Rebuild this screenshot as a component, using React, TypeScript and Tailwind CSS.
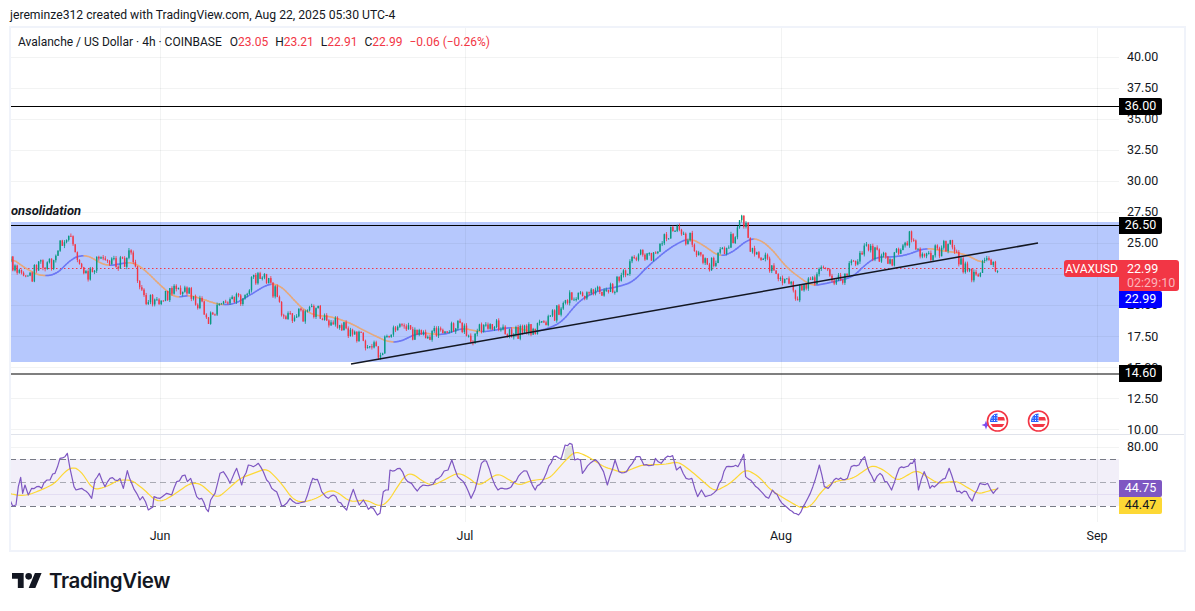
import type { ReactNode } from 'react';

// Everything in the plots is given in screenshot pixels; each svg's viewBox
// maps those back onto its own pane.
const PLOT_LEFT = 11;
const PLOT_WIDTH = 1108;
const MAIN_TOP = 28;
const MAIN_HEIGHT = 406;
const RSI_TOP = 435;
const RSI_HEIGHT = 87;

type Point = [number, number];

const PRICE_PATH: Point[] = [
  [10, 262], [20, 272], [28, 278], [38, 268], [45, 262], [52, 268], [58, 245], [66, 236], [72, 245], [76, 264],
  [90, 276], [98, 258], [112, 262], [125, 262], [130, 254], [136, 272], [146, 302], [158, 298], [175, 291],
  [190, 292], [200, 305], [208, 322], [216, 306], [230, 298], [242, 298], [252, 282], [264, 275], [274, 292],
  [283, 318], [300, 315], [316, 312], [328, 320], [345, 328], [360, 336], [378, 354], [388, 334], [400, 328],
  [420, 338], [440, 330], [455, 326], [470, 338], [490, 322], [505, 334], [525, 331], [545, 326], [556, 312],
  [570, 294], [590, 290], [605, 296], [620, 280], [636, 252], [650, 258], [660, 240], [674, 231], [690, 240],
  [698, 258], [708, 268], [722, 252], [733, 235], [742, 217], [750, 246], [765, 262], [775, 272], [785, 285],
  [798, 294], [810, 280], [820, 272], [838, 282], [850, 266], [865, 250], [878, 256], [890, 266], [900, 245],
  [912, 235], [920, 258], [935, 252], [950, 240], [957, 260], [968, 272], [975, 274], [984, 262], [997, 268],
];

const MA_PATH: Point[] = [
  [10, 257], [25, 268], [40, 276], [55, 275], [65, 266], [72, 258], [80, 256], [88, 255], [98, 262], [108, 266],
  [125, 263], [133, 262], [145, 270], [160, 285], [175, 298], [190, 295], [205, 300], [220, 305], [235, 304],
  [250, 295], [268, 284], [278, 284], [290, 295], [300, 307], [313, 315], [333, 317], [350, 323], [367, 332],
  [388, 342], [400, 342], [413, 335], [423, 333], [443, 335], [463, 328], [480, 332], [490, 331], [513, 327],
  [533, 332], [547, 329], [562, 322], [577, 303], [587, 296], [600, 290], [617, 287], [633, 282], [647, 267],
  [667, 250], [680, 242], [690, 238], [703, 245], [720, 257], [733, 252], [747, 240], [757, 238], [770, 247],
  [787, 268], [807, 283], [813, 286], [833, 282], [853, 277], [867, 263], [877, 257], [893, 257], [907, 255],
  [917, 251], [927, 248], [943, 251], [953, 252], [967, 255], [980, 262], [997, 268],
];

// RSI traces were read off two enlarged crops, so each has its own origin and scale
const fromCrop = (pts: Point[], ox: number, oy: number, sx: number, sy: number): Point[] =>
  pts.map(([x, y]) => [ox + x / sx, oy + y / sy]);

const RSI_LINE: Point[] = [
  ...fromCrop([
    [30, 210], [38, 228], [48, 225], [55, 170], [62, 142], [68, 190], [75, 165], [85, 195], [95, 175], [110, 170],
    [125, 175], [132, 158], [150, 150], [158, 132], [165, 130], [180, 85], [195, 80], [202, 70], [210, 115],
    [222, 170], [228, 180], [245, 175], [265, 190], [275, 205], [285, 150], [298, 130], [315, 170], [330, 145],
    [345, 150], [360, 145], [370, 175], [382, 122], [395, 160], [410, 190], [420, 210], [428, 200], [445, 240],
    [458, 232], [462, 200], [480, 205], [500, 190], [515, 195], [530, 155], [555, 135], [562, 155], [572, 145],
    [590, 200], [605, 205], [625, 245], [632, 210], [645, 190], [660, 130], [670, 125], [690, 160], [710, 115],
    [725, 165], [745, 105], [760, 110], [775, 100], [790, 125], [800, 150], [815, 175], [830, 185], [845, 228],
    [860, 220], [870, 205], [895, 220], [915, 215], [938, 145], [952, 148], [965, 185], [985, 205], [1000, 195],
    [1030, 230], [1040, 240], [1060, 178], [1078, 225], [1090, 210], [1105, 238], [1120, 235], [1132, 255],
    [1140, 250], [1150, 185], [1165, 180], [1170, 120], [1192, 116],
  ], 0, 430, 3, 3),
  ...fromCrop([
    [0, 100], [20, 140], [30, 145], [45, 168], [60, 150], [80, 150], [100, 130], [115, 108], [125, 105], [135, 75],
    [150, 125], [165, 140], [185, 190], [195, 165], [212, 85], [225, 78], [240, 130], [255, 165], [290, 155],
    [315, 115], [330, 108], [352, 165], [375, 130], [400, 65], [420, 70], [430, 30], [448, 28], [455, 75], [470, 75],
    [475, 115], [495, 85], [510, 75], [530, 110], [540, 150], [560, 75], [570, 110], [590, 110], [605, 85], [615, 65],
    [625, 65], [635, 90], [660, 90], [665, 70], [680, 85], [690, 70], [710, 62], [720, 105], [730, 95], [745, 130],
    [760, 130], [775, 185], [785, 165], [795, 185], [810, 180], [825, 165], [850, 95], [880, 95], [895, 58],
    [900, 125], [920, 145], [945, 175], [960, 190], [970, 165], [1000, 210], [1015, 225], [1038, 240], [1055, 205],
    [1075, 155], [1092, 90], [1105, 155], [1115, 160], [1130, 135], [1165, 130], [1175, 95], [1195, 90], [1210, 65],
    [1222, 110], [1235, 140], [1250, 115], [1280, 165], [1300, 100], [1335, 85], [1340, 72], [1350, 165], [1365, 110],
    [1380, 160], [1420, 130], [1430, 100], [1450, 170], [1475, 170], [1490, 198], [1510, 145], [1530, 145],
    [1545, 175], [1558, 158],
  ], 400, 435, 2.604, 3),
];

const RSI_MA: Point[] = [
  ...fromCrop([
    [30, 188], [50, 197], [85, 195], [130, 177], [165, 160], [190, 130], [215, 110], [240, 120], [280, 180],
    [320, 170], [355, 150], [395, 150], [440, 185], [460, 208], [485, 215], [520, 195], [570, 160], [600, 160],
    [650, 205], [670, 190], [720, 145], [800, 115], [840, 155], [880, 210], [910, 217], [950, 205], [990, 180],
    [1010, 185], [1050, 215], [1100, 210], [1140, 230], [1165, 215], [1192, 170],
  ], 0, 430, 3, 3),
  ...fromCrop([
    [0, 145], [15, 118], [32, 115], [60, 140], [85, 152], [110, 138], [150, 113], [175, 125], [205, 153], [255, 115],
    [285, 135], [310, 152], [340, 137], [390, 130], [420, 90], [455, 48], [490, 65], [530, 95], [580, 113], [630, 90],
    [690, 88], [725, 80], [760, 110], [800, 150], [820, 170], [860, 145], [900, 102], [935, 125], [965, 165],
    [1000, 190], [1045, 220], [1070, 215], [1100, 165], [1130, 140], [1180, 130], [1230, 90], [1260, 105],
    [1295, 138], [1345, 105], [1400, 145], [1450, 138], [1505, 177], [1558, 160],
  ], 400, 435, 2.604, 3),
];

const GRID_Y = [57, 88, 119, 150, 181, 212, 243, 274, 305, 336, 367, 398, 429];
const GRID_X = [160, 465, 781, 1097];

const PRICE_TICKS: [string, number][] = [
  ['40.00', 57], ['37.50', 88], ['35.00', 119], ['32.50', 150], ['30.00', 181], ['27.50', 212], ['25.00', 243],
  ['20.00', 305], ['17.50', 337], ['15.00', 368], ['12.50', 399], ['10.00', 430],
];

const MONTHS: [string, number][] = [['Jun', 160], ['Jul', 465], ['Aug', 781], ['Sep', 1097]];

const interpolate = (pts: Point[], x: number) => {
  if (x <= pts[0][0]) return pts[0][1];
  for (let i = 1; i < pts.length; i++) {
    if (x <= pts[i][0]) {
      const [x0, y0] = pts[i - 1];
      const [x1, y1] = pts[i];
      return y0 + ((y1 - y0) * (x - x0)) / (x1 - x0);
    }
  }
  return pts[pts.length - 1][1];
};

const makeRandom = (seed: number) => () => {
  seed = (seed + 0x6d2b79f5) | 0;
  let t = Math.imul(seed ^ (seed >>> 15), 1 | seed);
  t = (t + Math.imul(t ^ (t >>> 7), 61 | t)) ^ t;
  return ((t ^ (t >>> 14)) >>> 0) / 4294967296;
};

const buildCandles = () => {
  const random = makeRandom(312);
  const candles = [];
  let prev = PRICE_PATH[0][1];
  for (let x = 10; x <= 997; x += 2.15) {
    const close = interpolate(PRICE_PATH, x) + (random() - 0.5) * 15;
    const top = Math.min(prev, close);
    const bottom = Math.max(prev, close);
    candles.push({
      x,
      up: close < prev,
      top,
      height: Math.max(bottom - top, 1),
      high: top - random() * 2.5,
      low: bottom + random() * 2.5,
    });
    prev = close;
  }
  return candles;
};

const buildMaSegments = () => {
  const raw: Point[] = [];
  for (let x = 10; x <= 985; x += 2) raw.push([x, interpolate(MA_PATH, x)]);
  const smooth = raw.map(([x], i) => {
    const near = raw.slice(Math.max(0, i - 3), i + 4);
    return [x, near.reduce((sum, p) => sum + p[1], 0) / near.length] as Point;
  });
  return smooth.slice(1).map((p, i) => ({ a: smooth[i], b: p, rising: p[1] < smooth[i][1] }));
};

// the crops only catch the main swings, the bar-to-bar jitter is filled in here
const roughen = (pts: Point[]) => {
  const random = makeRandom(44);
  const out: Point[] = [];
  for (let i = 0; i < pts.length - 1; i++) {
    const [x0, y0] = pts[i];
    const [x1, y1] = pts[i + 1];
    out.push(pts[i]);
    const steps = Math.floor((x1 - x0) / 2.15);
    for (let s = 1; s < steps; s++) {
      const t = s / steps;
      out.push([x0 + (x1 - x0) * t, y0 + (y1 - y0) * t + (random() - 0.5) * 3.2]);
    }
  }
  out.push(pts[pts.length - 1]);
  return out;
};

const smoothLine = (pts: Point[]) => {
  const raw: Point[] = [];
  for (let x = pts[0][0]; x <= pts[pts.length - 1][0]; x += 2) raw.push([x, interpolate(pts, x)]);
  return raw.map(([x], i) => {
    const near = raw.slice(Math.max(0, i - 2), i + 3);
    return [x, near.reduce((sum, p) => sum + p[1], 0) / near.length] as Point;
  });
};

const candles = buildCandles();
const maSegments = buildMaSegments();
const toPoints = (pts: Point[]) => pts.map(p => p.join(',')).join(' ');

const UsFlag = ({ cx, cy }: { cx: number; cy: number }) => (
  <g transform={`translate(${cx} ${cy})`}>
    <circle r="10" fill="#fff" stroke="#f23645" strokeWidth="1.6" />
    <clipPath id={`flag-${cx}`}>
      <circle r="7.5" />
    </clipPath>
    <g clipPath={`url(#flag-${cx})`}>
      <rect x="-8" y="-8" width="16" height="16" fill="#fff" />
      <rect x="0" y="-4" width="8" height="3.5" fill="#f23645" />
      <rect x="-8" y="3" width="16" height="3" fill="#f23645" />
      <rect x="-8" y="-8" width="8" height="9" fill="#2962ff" />
      {[-6, -3.5, -1].map(x =>
        [-6, -3.5, -1].map(y => <rect key={`${x}${y}`} x={x} y={y} width="1" height="1" fill="#fff" />)
      )}
    </g>
  </g>
);

const GridLines = ({ rows }: { rows: number[] }) => (
  <g stroke="#2a2e39" strokeOpacity="0.06">
    {rows.map(y => (
      <line key={y} x1={PLOT_LEFT} x2={PLOT_LEFT + PLOT_WIDTH} y1={y + 0.5} y2={y + 0.5} />
    ))}
    {GRID_X.map(x => (
      <line key={x} x1={x + 0.5} x2={x + 0.5} y1="0" y2="600" />
    ))}
  </g>
);

const MainPlot = () => (
  <svg
    className="block shrink-0"
    width={PLOT_WIDTH}
    height={MAIN_HEIGHT}
    viewBox={`${PLOT_LEFT} ${MAIN_TOP} ${PLOT_WIDTH} ${MAIN_HEIGHT}`}
  >
    <rect x="0" y="222" width="1119" height="140" fill="#b6c8fd" />
    <GridLines rows={GRID_Y} />
    <line x1="0" x2="1119" y1="106.5" y2="106.5" stroke="#000" />
    <line x1="0" x2="1119" y1="225.5" y2="225.5" stroke="#000" strokeWidth="1.2" />
    <line x1="0" x2="1119" y1="374" y2="374" stroke="#000" strokeWidth="1.2" />
    <line x1="0" x2="1064" y1="268.5" y2="268.5" stroke="#f23645" strokeDasharray="1.5 2.5" />
    {maSegments.map(({ a, b, rising }) => (
      <line
        key={a[0]}
        x1={a[0]}
        y1={a[1]}
        x2={b[0]}
        y2={b[1]}
        stroke={rising ? '#6d78f4' : '#e6a97c'}
        strokeWidth="1.5"
        strokeLinecap="round"
      />
    ))}
    {candles.map(c => {
      const color = c.up ? '#089981' : '#f23645';
      return (
        <g key={c.x} fill={color}>
          <rect x={c.x + 0.3} y={c.high} width="0.8" height={c.low - c.high} />
          <rect x={c.x} y={c.top} width="1.4" height={c.height} />
        </g>
      );
    })}
    <line x1="351" y1="364" x2="1038" y2="243" stroke="#131722" strokeWidth="1.5" />
    <text x="11" y="215" fontSize="13" fontWeight="700" fontStyle="italic" fill="#131722">
      onsolidation
    </text>
    <path d="M986 420.5l1.2 3.3 3.3 1.2-3.3 1.2-1.2 3.3-1.2-3.3-3.3-1.2 3.3-1.2z" fill="#7b4ff0" />
    <UsFlag cx={997.5} cy={421} />
    <UsFlag cx={1038.5} cy={421} />
  </svg>
);

const RsiPlot = () => (
  <svg
    className="block shrink-0"
    width={PLOT_WIDTH}
    height={RSI_HEIGHT}
    viewBox={`${PLOT_LEFT} ${RSI_TOP} ${PLOT_WIDTH} ${RSI_HEIGHT}`}
  >
    <rect x="0" y="459" width="1119" height="47" fill="#f2eff9" />
    <GridLines rows={[447]} />
    <line x1="0" x2="1119" y1="494.5" y2="494.5" stroke="#e3ddf2" />
    <g stroke="#787b86" strokeDasharray="6 4">
      <line x1="0" x2="1119" y1="459.5" y2="459.5" />
      <line x1="0" x2="1119" y1="482.5" y2="482.5" strokeOpacity="0.6" />
      <line x1="0" x2="1119" y1="506.5" y2="506.5" />
    </g>
    <polygon points="564,459 565,449 569,446 572,446 573,459" fill="#dfe3dc" />
    <polyline points={toPoints(smoothLine(RSI_MA))} fill="none" stroke="#fdd835" strokeWidth="1.2" />
    <polyline
      points={toPoints(roughen(RSI_LINE))}
      fill="none"
      stroke="#7e57c2"
      strokeWidth="1.2"
      strokeLinejoin="round"
    />
  </svg>
);

const PriceTag = ({ y, bg, fg = 'text-white', children }: { y: number; bg: string; fg?: string; children: ReactNode }) => (
  <div
    className={`absolute left-0 flex h-[17px] w-[43px] items-center justify-center rounded-r-[2px] ${bg} ${fg}`}
    style={{ top: y - 8.5 }}
  >
    {children}
  </div>
);

const Tick = ({ y, children }: { y: number; children: ReactNode }) => (
  <div className="absolute left-[8px] leading-[16px]" style={{ top: y - 8 }}>
    {children}
  </div>
);

const Logo = () => (
  <div className="flex h-[59px] items-start pl-[3px] pt-[20px]">
    <svg className="mt-[1px]" width="30" height="15" viewBox="0 4 36 18" fill="#131722">
      <path d="M14 22H7V11H0V4h14v18zM28 22h-8l7.5-18h8L28 22z" />
      <circle cx="20" cy="8" r="4" />
    </svg>
    <span className="ml-[7px] font-['Inter',sans-serif] text-[20.5px] leading-[18px] font-semibold tracking-[-0.35px] text-[#131722]">
      TradingView
    </span>
  </div>
);

export default function App() {
  return (
    <div className="h-[611px] w-[1195px] overflow-hidden bg-white pl-[9px] font-['Roboto','Open_Sans',sans-serif] text-[#131722]">
      <div className="flex h-[26px] items-center pl-[1px] pt-[4px] text-[12.2px]">
        jereminze312 created with TradingView.com, Aug 22, 2025 05:30 UTC-4
      </div>

      <div className="relative flex h-[526px] w-[1177px] flex-col border-2 border-[#f0f3fa]">
        <div className="absolute left-[7px] top-[4px] z-10 flex h-[20px] items-center text-[12px]">
          <span>Avalanche / US Dollar · 4h · COINBASE</span>
          <span className="ml-[8px]">
            O<span className="text-[#f23645]">23.05</span>
          </span>
          <span className="ml-[7px]">
            H<span className="text-[#f23645]">23.21</span>
          </span>
          <span className="ml-[7px]">
            L<span className="text-[#f23645]">22.91</span>
          </span>
          <span className="ml-[7px]">
            C<span className="text-[#f23645]">22.99</span>
          </span>
          <span className="ml-[7px] text-[#f23645]">−0.06 (−0.26%)</span>
        </div>

        <div className="flex h-[407px] border-b border-[#e0e3eb]">
          <MainPlot />
          <div className="relative flex-1 text-[12.5px]" style={{ marginTop: -MAIN_TOP }}>
            {PRICE_TICKS.map(([label, y]) => (
              <Tick key={label} y={y}>
                {label}
              </Tick>
            ))}
            <PriceTag y={106.5} bg="bg-black">36.00</PriceTag>
            <PriceTag y={225.5} bg="bg-black">26.50</PriceTag>
            <PriceTag y={373.5} bg="bg-black">14.60</PriceTag>
            <PriceTag y={299.5} bg="bg-[#0000ff]">22.99</PriceTag>
            <div className="absolute left-0 top-[260px] flex h-[31px] w-[60px] flex-col items-start justify-center rounded-r-[3px] bg-[#f23645] pl-[8px] leading-[14px] text-white">
              <span>22.99</span>
              <span className="text-[#fbb4bb]">02:29:10</span>
            </div>
            <div className="absolute right-full top-[260px] flex h-[17px] w-[55px] items-center justify-center rounded-l-[3px] bg-[#f23645] text-[12px] text-white">
              AVAXUSD
            </div>
          </div>
        </div>

        <div className="flex h-[87px]">
          <RsiPlot />
          <div className="relative flex-1 text-[12.5px]" style={{ marginTop: -RSI_TOP }}>
            <Tick y={447}>80.00</Tick>
            <PriceTag y={488.5} bg="bg-[#7e57c2]">44.75</PriceTag>
            <PriceTag y={505.5} bg="bg-[#fdd835]" fg="text-[#131722]">44.47</PriceTag>
          </div>
        </div>

        <div className="relative h-[28px] text-[12.5px]">
          {MONTHS.map(([label, x]) => (
            <span
              key={label}
              className="absolute top-[6px] -translate-x-1/2 leading-[16px]"
              style={{ left: x - PLOT_LEFT }}
            >
              {label}
            </span>
          ))}
        </div>
      </div>

      <Logo />
    </div>
  );
}
